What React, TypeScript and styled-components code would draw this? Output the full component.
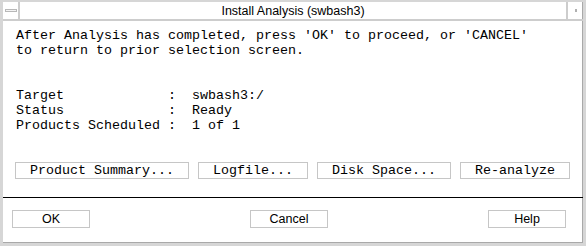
import { Fragment } from 'react';
import styled, { createGlobalStyle } from 'styled-components';

const GlobalStyle = createGlobalStyle`
  html, body {
    margin: 0;
    padding: 0;
    background: #ffffff;
  }
  * {
    box-sizing: border-box;
  }
`;

const Window = styled.div`
  width: 586px;
  height: 246px;
  display: flex;
  flex-direction: column;
  background: #ffffff;
  border-style: solid;
  border-color: #d6d6d6;
  border-width: 1px 3px 3px 3px;
  box-shadow: inset 0 -1px 0 #a9a9a9, inset -1px 0 0 #a9a9a9;
`;

const TitleBar = styled.div`
  display: flex;
  height: 20px;
  border-top: 1px solid #d6d6d6;
  border-bottom: 2px solid #cdcdcd;
`;

const MenuBox = styled.div`
  width: 17px;
  display: flex;
  align-items: center;
  justify-content: center;
  border-right: 2px solid #cdcdcd;
`;

const Dash = styled.span`
  width: 12px;
  height: 3px;
  border: 1px solid #b8b8b8;
  background: #f4f4f4;
`;

const Title = styled.div`
  flex: 1;
  text-align: center;
  font-family: 'Liberation Sans', Arial, sans-serif;
  font-size: 12.5px;
  line-height: 18px;
  color: #000;
`;

const MaxBox = styled.div`
  width: 17px;
  display: flex;
  align-items: center;
  justify-content: center;
  border-left: 2px solid #cdcdcd;
`;

const Dot = styled.span`
  width: 2px;
  height: 3px;
  background: #b0b0b0;
`;

const Body = styled.div`
  padding: 7px 13px 0 13px;
  font-family: 'Liberation Mono', 'Courier New', monospace;
  font-size: 13.33px;
  line-height: 15px;
  color: #000;
`;

const Message = styled.p`
  margin: 0 0 30px 0;
  white-space: pre;
`;

const InfoGrid = styled.div`
  display: grid;
  grid-template-columns: 19ch auto;
  margin-bottom: 29px;
`;

const Label = styled.span`
  white-space: pre;
`;

const Value = styled.span`
  white-space: pre;
`;

const ActionRow = styled.div`
  display: flex;
  gap: 9px;
  margin-left: -1px;
`;

const ActionButton = styled.button`
  height: 17px;
  padding: 0 14px;
  border: 1px solid #c6c6c6;
  background: #ffffff;
  font-family: 'Liberation Mono', 'Courier New', monospace;
  font-size: 13.33px;
  line-height: 15px;
  color: #000;
  white-space: pre;
  border-radius: 0;
`;

const Separator = styled.hr`
  margin: 18px 0 0 0;
  border: none;
  height: 1px;
  background: #000;
`;

const Footer = styled.div`
  display: flex;
  justify-content: space-between;
  padding: 12px 17px 0 9px;
`;

const DialogButton = styled.button`
  width: 78px;
  height: 18px;
  padding: 0;
  border: 1px solid #c6c6c6;
  background: #ffffff;
  font-family: 'Liberation Sans', Arial, sans-serif;
  font-size: 12.5px;
  line-height: 16px;
  color: #000;
  border-radius: 0;
`;

const info = [
  { label: 'Target', value: ':  swbash3:/' },
  { label: 'Status', value: ':  Ready' },
  { label: 'Products Scheduled', value: ':  1 of 1' },
];

const actions = ['Product Summary...', 'Logfile...', 'Disk Space...', 'Re-analyze'];

function App() {
  return (
    <>
      <GlobalStyle />
      <Window>
        <TitleBar>
          <MenuBox>
            <Dash />
          </MenuBox>
          <Title>Install Analysis (swbash3)</Title>
          <MaxBox>
            <Dot />
          </MaxBox>
        </TitleBar>
        <Body>
          <Message>
            {"After Analysis has completed, press 'OK' to proceed, or 'CANCEL'\nto return to prior selection screen."}
          </Message>
          <InfoGrid>
            {info.map((row) => (
              <Fragment key={row.label}>
                <Label>{row.label}</Label>
                <Value>{row.value}</Value>
              </Fragment>
            ))}
          </InfoGrid>
          <ActionRow>
            {actions.map((a) => (
              <ActionButton key={a}>{a}</ActionButton>
            ))}
          </ActionRow>
        </Body>
        <Separator />
        <Footer>
          <DialogButton>OK</DialogButton>
          <DialogButton>Cancel</DialogButton>
          <DialogButton>Help</DialogButton>
        </Footer>
      </Window>
    </>
  );
}

export default App;
